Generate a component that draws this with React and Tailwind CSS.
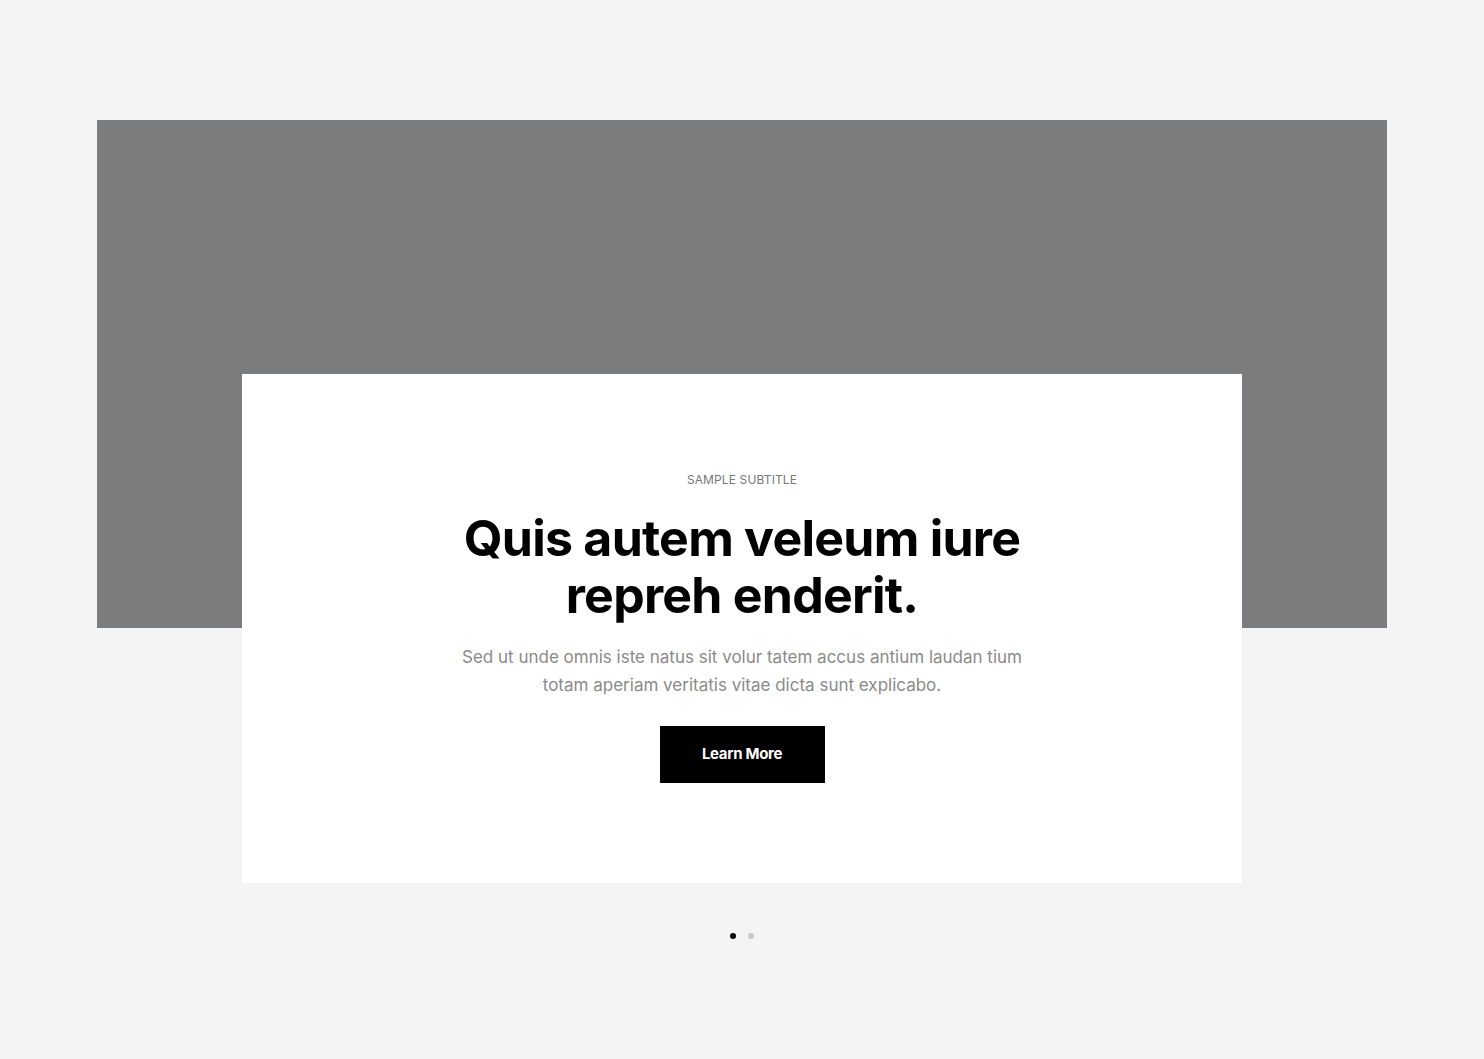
import React from 'react';

const font = { fontFamily: 'Inter, "Noto Sans", sans-serif' };

export default function App() {
  return (
    <div className="min-h-[1059px] bg-[#f4f4f4] pt-[120px] px-[97px]" style={font}>
      {/* hero image placeholder */}
      <div className="h-[508px] bg-[#7b7c7d]" />

      {/* slide card */}
      <div className="mx-auto -mt-[254px] w-[1000px] h-[509px] bg-white pt-[98px] flex flex-col items-center text-center">
        <p className="text-[12px] leading-[16px] uppercase text-[#777] tracking-[0.01em]">Sample Subtitle</p>
        <h1 className="mt-[22px] text-[50px] leading-[57px] font-bold text-black tracking-[-0.015em] max-w-[600px]">
          Quis autem veleum iure repreh enderit.
        </h1>
        <p className="mt-[19px] text-[17px] leading-[28px] text-[#8a8a8a] max-w-[570px]">
          Sed ut unde omnis iste natus sit volur tatem accus antium laudan tium totam aperiam veritatis vitae dicta sunt explicabo.
        </p>
        <button className="mt-[27px] w-[165px] h-[57px] bg-black text-white text-[15px] font-bold tracking-[-0.02em]">
          Learn More
        </button>
      </div>

      {/* pagination dots */}
      <div className="flex justify-center gap-[12px] mt-[50px]">
        <span className="w-[6px] h-[6px] rounded-full bg-black" />
        <span className="w-[6px] h-[6px] rounded-full bg-[#c8c8c8]" />
      </div>
    </div>
  );
}
